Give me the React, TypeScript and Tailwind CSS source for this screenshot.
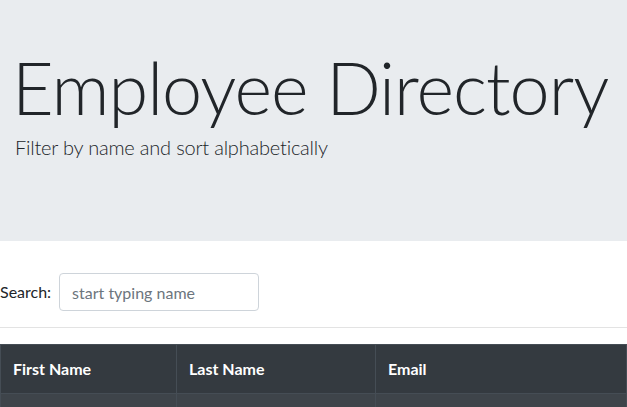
const employees = [
  { first: 'Alice', last: 'Anderson', email: 'alice.anderson@example.com' },
  { first: 'Brian', last: 'Baker', email: 'brian.baker@example.com' },
  { first: 'Carla', last: 'Chen', email: 'carla.chen@example.com' },
];

export default function App() {
  return (
    <div className="min-h-screen bg-white text-[#212529] font-['Lato',sans-serif] overflow-hidden">
      {/* jumbotron */}
      <div className="bg-[#e9ecef] h-[241px] px-[15px] pt-[36px]">
        <h1 className="text-[72px] leading-[102px] font-light tracking-[-1px] whitespace-nowrap -ml-[3px]">Employee Directory</h1>
        <p className="text-[20px] leading-[30px] font-light tracking-[-0.2px] -mt-[6px]">Filter by name and sort alphabetically</p>
      </div>

      <div className="mt-[32px] flex items-center gap-[8px]">
        <label className="text-[16px]">Search:</label>
        <input
          type="text"
          placeholder="start typing name"
          className="w-[200px] h-[38px] px-[12px] border border-[#ced4da] rounded-[4px] text-[16px] placeholder:text-[#6c757d] outline-none"
        />
      </div>

      <hr className="mt-[16px] mb-[16px] border-t border-[#e3e3e3]" />

      <table className="w-full border-collapse text-white text-[16px]">
        <thead>
          <tr className="bg-[#343a40]">
            <th className="w-[176px] text-left font-bold px-[12px] py-[12px] leading-[24px] border border-[#454d55]">First Name</th>
            <th className="w-[199px] text-left font-bold px-[12px] py-[12px] leading-[24px] border border-[#454d55]">Last Name</th>
            <th className="text-left font-bold px-[12px] py-[12px] leading-[24px] border border-[#454d55]">Email</th>
          </tr>
        </thead>
        <tbody>
          {employees.map((e, i) => (
            <tr key={e.email} className={i % 2 === 0 ? 'bg-[#3e444a]' : 'bg-[#343a40]'}>
              <td className="px-[12px] py-[12px] leading-[24px] border border-[#454d55]">{e.first}</td>
              <td className="px-[12px] py-[12px] leading-[24px] border border-[#454d55]">{e.last}</td>
              <td className="px-[12px] py-[12px] leading-[24px] border border-[#454d55]">{e.email}</td>
            </tr>
          ))}
        </tbody>
      </table>
    </div>
  );
}
